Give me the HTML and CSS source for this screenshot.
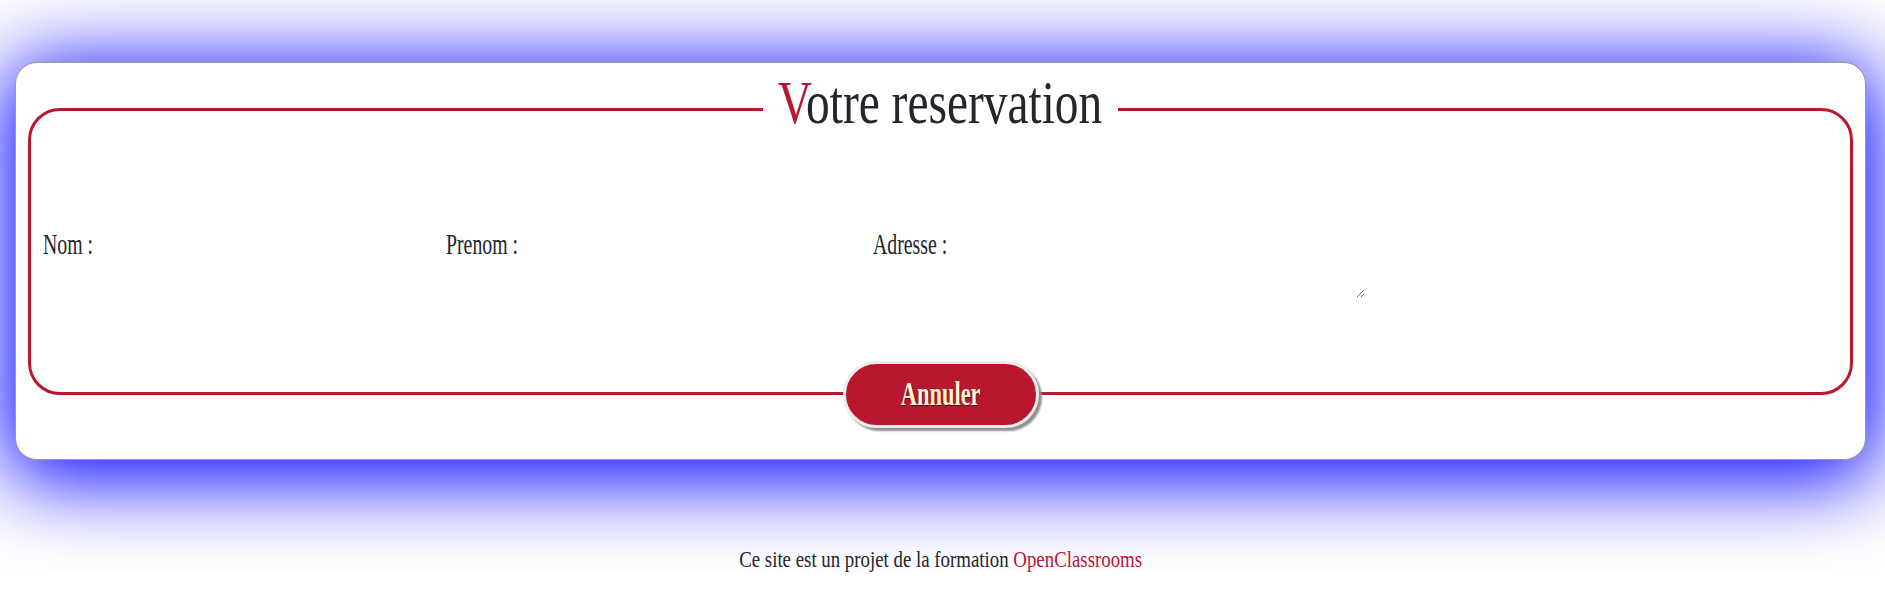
FILE: index.html
```html
<!DOCTYPE html>
<html lang="fr">
<head>
<meta charset="utf-8">
<title>Votre reservation</title>
<link rel="stylesheet" href="styles.css">
</head>
<body>
<main class="page">
  <section class="card">
    <form class="resa">
      <fieldset class="frame">
        <legend class="title"><span class="title-text"><span class="accent">V</span>otre reservation</span></legend>
        <div class="fields">
          <div class="field field-nom">
            <label class="lbl" for="nom"><span class="lbl-text">Nom :</span></label>
            <input class="inp" id="nom" type="text">
          </div>
          <div class="field field-prenom">
            <label class="lbl lbl-wide" for="prenom"><span class="lbl-text">Prenom :</span></label>
            <input class="inp" id="prenom" type="text">
          </div>
          <div class="field field-adresse">
            <label class="lbl lbl-wide" for="adresse"><span class="lbl-text">Adresse :</span></label>
            <textarea class="area" id="adresse"></textarea>
          </div>
        </div>
      </fieldset>
      <div class="actions">
        <button class="btn" type="reset"><span class="btn-text">Annuler</span></button>
      </div>
    </form>
  </section>
  <footer class="foot">
    <p class="foot-text">Ce site est un projet de la formation <a class="foot-link" href="#">OpenClassrooms</a></p>
  </footer>
</main>
</body>
</html>
```

FILE: styles.css
```css
html, body {
  margin: 0;
  padding: 0;
  background: #ffffff;
}

body {
  font-family: "Liberation Serif", "DejaVu Serif", serif;
  color: #23262d;
  overflow: hidden;
}

.page {
  padding: 62px 19px 0 15px;
}

.card {
  background: #ffffff;
  border: 1px solid #9a9a9a;
  border-radius: 22px;
  box-shadow: 0 11px 84px 9px #0000ff;
  padding: 10px 12px 31px 12px;
}

.resa {
  margin: 0;
}

.frame {
  margin: 0;
  border: 3px solid #b9172f;
  border-radius: 32px;
  padding: 82px 12px 94px 12px;
  min-width: 0;
}

.title {
  margin: 0 auto;
  width: 355px;
  padding: 0;
  display: flex;
  justify-content: center;
  font-size: 62px;
  line-height: 72px;
  white-space: nowrap;
  color: #23262d;
}

.title-text {
  display: inline-block;
  transform: translateY(-7px) scaleX(0.765);
  transform-origin: center;
}

.accent {
  color: #b9172f;
}

.fields {
  display: grid;
  grid-template-columns: 403px 427px 1fr;
  align-items: start;
}

.field {
  display: flex;
  align-items: flex-start;
}

.lbl {
  display: block;
  width: 56px;
  font-size: 30px;
  line-height: 34px;
  white-space: nowrap;
}

.lbl-wide {
  width: 80px;
}

.lbl-text {
  display: inline-block;
  transform: scaleX(0.66);
  transform-origin: left;
}

.inp {
  width: 300px;
  height: 30px;
  border: none;
  outline: none;
  background: transparent;
  font: inherit;
  font-size: 18px;
  padding: 0 6px;
}

.area {
  width: 412px;
  height: 71px;
  border: none;
  outline: none;
  background: transparent;
  padding: 0;
  margin: 0;
  font-family: "DejaVu Sans Mono", monospace;
  font-size: 13px;
  box-sizing: border-box;
}

.actions {
  display: flex;
  justify-content: center;
  margin-top: -34px;
  position: relative;
}

.btn {
  width: 196px;
  height: 67px;
  border: 3px solid #ececec;
  border-radius: 34px;
  background: #b9172f;
  box-shadow: 3px 3px 2px #8f8f8f;
  color: #fff6d8;
  font-family: "Liberation Serif", "DejaVu Serif", serif;
  font-weight: bold;
  font-size: 33px;
  line-height: 1;
  padding: 0;
  text-shadow: 1px 1px 1px #3a1a10;
  cursor: pointer;
}

.btn-text {
  display: inline-block;
  transform: scaleX(0.68);
  transform-origin: center;
}

.foot {
  display: flex;
  justify-content: center;
  margin-top: 85px;
}

.foot-text {
  margin: 0;
  font-size: 24px;
  line-height: 28px;
  white-space: nowrap;
  display: inline-block;
  transform: scaleX(0.785);
  transform-origin: center;
}

.foot-link {
  color: #b9172f;
  text-decoration: none;
}
```
